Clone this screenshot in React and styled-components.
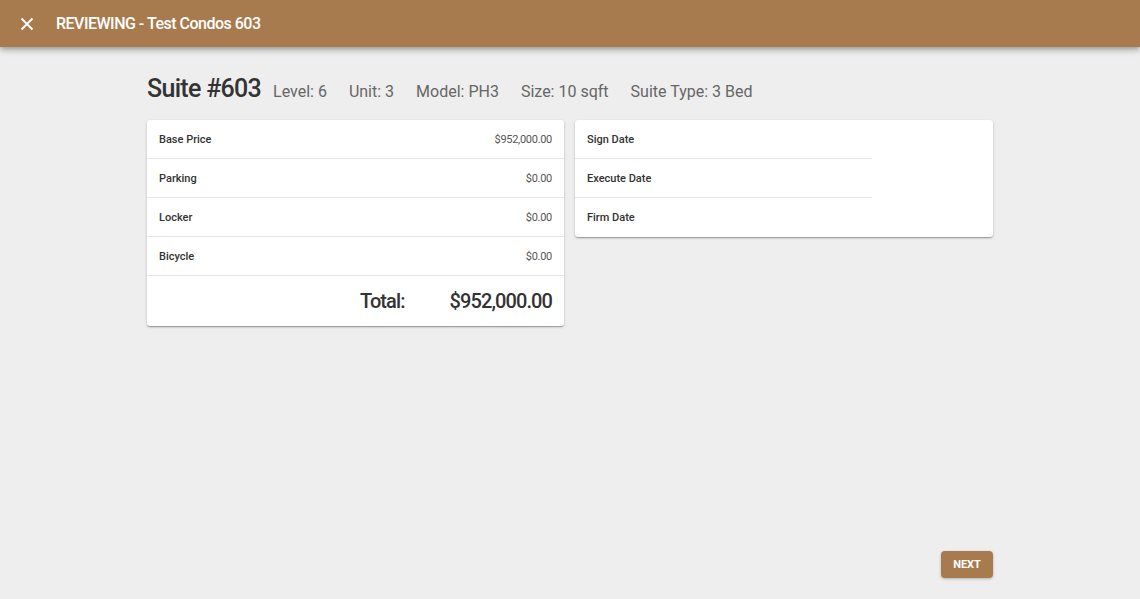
import React from 'react';
import styled, { createGlobalStyle } from 'styled-components';

const brown = '#a87b4f';

const Global = createGlobalStyle`
  html, body {
    margin: 0;
    padding: 0;
    background: #eeeeee;
    font-family: Roboto, "Liberation Sans", sans-serif;
  }
  * { box-sizing: border-box; }
`;

const Page = styled.div`
  min-height: 599px;
  display: flex;
  flex-direction: column;
`;

const AppBar = styled.header`
  height: 47px;
  background: ${brown};
  color: #fff;
  display: flex;
  align-items: center;
  padding: 0 20px;
  gap: 22px;
  box-shadow: 0 2px 4px -1px rgba(0,0,0,0.2), 0 4px 5px 0 rgba(0,0,0,0.14), 0 1px 10px 0 rgba(0,0,0,0.12);
`;

const CloseBtn = styled.button`
  border: 0;
  background: none;
  padding: 0;
  width: 14px;
  height: 14px;
  display: flex;
  color: #fff;
  cursor: pointer;
`;

const Title = styled.h1`
  margin: 0;
  font-size: 16px;
  font-weight: 500;
  letter-spacing: -0.5px;
`;

const Main = styled.main`
  flex: 1;
  width: 846px;
  margin: 0 auto;
  padding-top: 27px;
  display: flex;
  flex-direction: column;
`;

const Heading = styled.div`
  display: flex;
  align-items: baseline;
  gap: 22px;
  margin-bottom: 17px;
`;

const SuiteName = styled.h2`
  margin: 0 -10px 0 0;
  font-size: 25px;
  font-weight: 500;
  letter-spacing: -0.7px;
  color: #333;
`;

const Meta = styled.span`
  font-size: 16px;
  color: #666;
`;

const Cards = styled.div`
  display: grid;
  grid-template-columns: 417px 418px;
  gap: 11px;
  align-items: start;
`;

const Card = styled.section`
  background: #fff;
  border-radius: 3px;
  box-shadow: 0 1px 3px rgba(0,0,0,0.2), 0 1px 1px rgba(0,0,0,0.14), 0 2px 1px -1px rgba(0,0,0,0.12);
  overflow: hidden;
`;

const Table = styled.div`
  width: ${p => p.$width || '100%'};
`;

const Row = styled.div`
  height: 39px;
  display: flex;
  align-items: center;
  justify-content: space-between;
  padding: 0 12px;
  border-bottom: 1px solid #e6e6e6;
  ${p => p.$last && 'border-bottom: 0;'}
`;

const Label = styled.span`
  font-size: 11px;
  font-weight: 500;
  color: #333;
`;

const Value = styled.span`
  font-size: 11px;
  letter-spacing: -0.3px;
  color: #555;
`;

const TotalRow = styled.div`
  height: 50px;
  display: flex;
  align-items: center;
  justify-content: flex-end;
  padding: 0 12px;
  gap: 45px;
  font-size: 20px;
  font-weight: 500;
  letter-spacing: -0.9px;
  color: #333;
`;

const Footer = styled.div`
  display: flex;
  justify-content: flex-end;
  margin-top: auto;
  padding-bottom: 21px;
`;

const NextButton = styled.button`
  border: 0;
  background: ${brown};
  color: #fff;
  font-family: inherit;
  font-size: 11px;
  font-weight: 700;
  height: 27px;
  width: 52px;
  border-radius: 4px;
  box-shadow: 0 1px 3px rgba(0,0,0,0.25);
  cursor: pointer;
`;

const prices = [
  ['Base Price', '$952,000.00'],
  ['Parking', '$0.00'],
  ['Locker', '$0.00'],
  ['Bicycle', '$0.00'],
];

const dates = ['Sign Date', 'Execute Date', 'Firm Date'];

const App = () => {
  return (
    <Page>
      <Global />
      <AppBar>
        <CloseBtn aria-label="close">
          <svg width="14" height="14" viewBox="0 0 14 14">
            <path d="M1.5 1.5 L12.5 12.5 M12.5 1.5 L1.5 12.5" stroke="#fff" strokeWidth="1.8" />
          </svg>
        </CloseBtn>
        <Title>REVIEWING - Test Condos 603</Title>
      </AppBar>

      <Main>
        <Heading>
          <SuiteName>Suite #603</SuiteName>
          <Meta>Level: 6</Meta>
          <Meta>Unit: 3</Meta>
          <Meta>Model: PH3</Meta>
          <Meta>Size: 10 sqft</Meta>
          <Meta>Suite Type: 3 Bed</Meta>
        </Heading>

        <Cards>
          <Card>
            <Table>
              {prices.map(([label, value]) => (
                <Row key={label}>
                  <Label>{label}</Label>
                  <Value>{value}</Value>
                </Row>
              ))}
            </Table>
            <TotalRow>
              <span>Total:</span>
              <span>$952,000.00</span>
            </TotalRow>
          </Card>

          <Card>
            <Table $width="297px">
              {dates.map((d, i) => (
                <Row key={d} $last={i === dates.length - 1}>
                  <Label>{d}</Label>
                </Row>
              ))}
            </Table>
          </Card>
        </Cards>

        <Footer>
          <NextButton>NEXT</NextButton>
        </Footer>
      </Main>
    </Page>
  );
};

export default App;
